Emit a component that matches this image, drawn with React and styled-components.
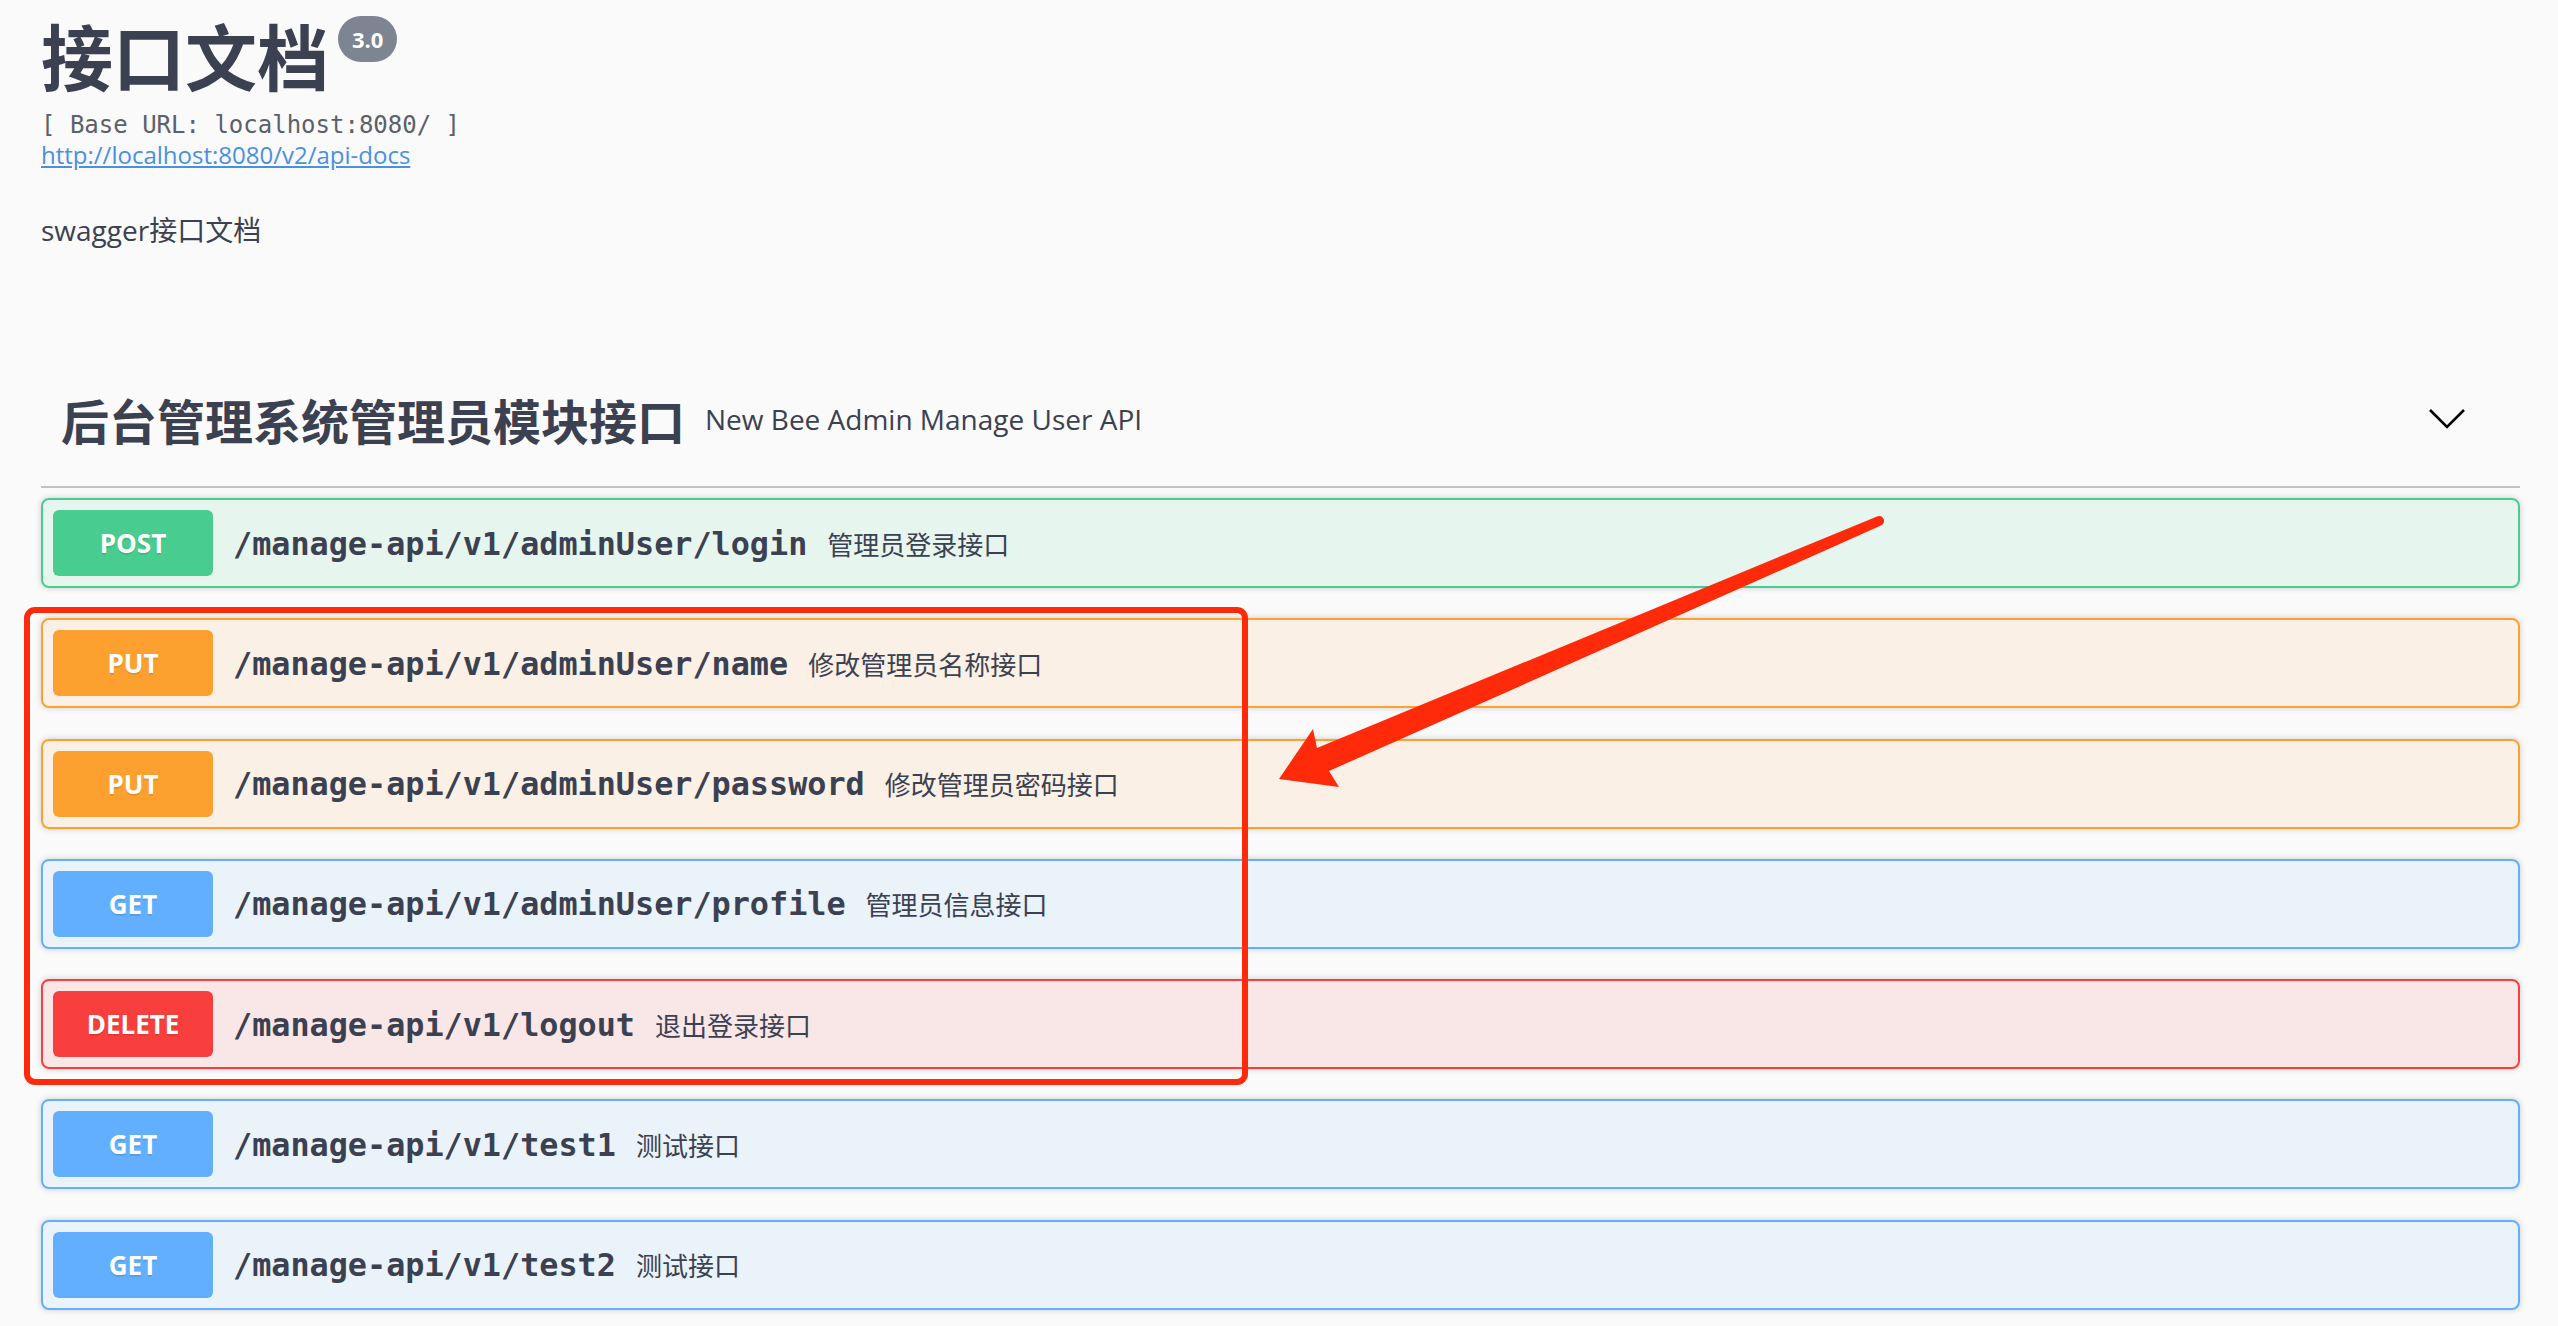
import React from "react";
import styled, { createGlobalStyle } from "styled-components";

const GlobalStyle = createGlobalStyle`
	html, body {
		margin: 0;
		padding: 0;
		background: #fafafa;
	}
	body {
		font-family: "Open Sans", "Noto Sans CJK SC", sans-serif;
		color: #3b4151;
	}
`;

const METHODS = {
	POST: { border: "#49cc90", bg: "rgba(73, 204, 144, 0.1)" },
	PUT: { border: "#fca130", bg: "rgba(252, 161, 48, 0.1)" },
	GET: { border: "#61affe", bg: "rgba(97, 175, 254, 0.1)" },
	DELETE: { border: "#f93e3e", bg: "rgba(249, 62, 62, 0.1)" },
};

const ops = [
	{ method: "POST", path: "/manage-api/v1/adminUser/login", desc: "管理员登录接口" },
	{ method: "PUT", path: "/manage-api/v1/adminUser/name", desc: "修改管理员名称接口" },
	{ method: "PUT", path: "/manage-api/v1/adminUser/password", desc: "修改管理员密码接口" },
	{ method: "GET", path: "/manage-api/v1/adminUser/profile", desc: "管理员信息接口" },
	{ method: "DELETE", path: "/manage-api/v1/logout", desc: "退出登录接口" },
	{ method: "GET", path: "/manage-api/v1/test1", desc: "测试接口" },
	{ method: "GET", path: "/manage-api/v1/test2", desc: "测试接口" },
];

const Page = styled.div`
	position: relative;
	width: 2558px;
	min-height: 1326px;
	overflow: hidden;
`;

const Wrapper = styled.div`
	padding: 0 38px 0 41px;
`;

const Info = styled.div`
	padding-top: 10px;
`;

const TitleRow = styled.div`
	display: flex;
	align-items: flex-start;
`;

const Title = styled.h2`
	margin: 0;
	font-family: "Noto Sans CJK SC", sans-serif;
	font-size: 72px;
	line-height: 88px;
	font-weight: 700;
	color: #3b4151;
`;

const Version = styled.span`
	margin: 6px 0 0 9px;
	height: 46px;
	padding: 0 14px;
	border-radius: 23px;
	background: #7d8492;
	color: #fff;
	font-family: "Open Sans", sans-serif;
	font-weight: 700;
	font-size: 22px;
	line-height: 46px;
`;

const BaseUrl = styled.div`
	margin-top: 12px;
	font-family: "DejaVu Sans Mono", monospace;
	font-size: 24px;
	line-height: 30px;
	color: #5b606c;
`;

const Link = styled.a`
	display: inline-block;
	margin-top: 0;
	font-family: "Open Sans", sans-serif;
	font-size: 24px;
	line-height: 30px;
	color: #4990e2;
	text-decoration: underline;
`;

const Description = styled.p`
	margin: 40px 0 0;
	font-family: "Open Sans", "Noto Sans CJK SC", sans-serif;
	font-size: 28px;
	line-height: 40px;
	color: #3b4151;
`;

const Tag = styled.div`
	margin: 106px 0 10px;
	padding: 18px 40px 22px 20px;
	min-height: 90px;
	display: flex;
	align-items: center;
	border-bottom: 2px solid rgba(59, 65, 81, 0.3);
`;

const TagName = styled.span`
	font-family: "Noto Sans CJK SC", sans-serif;
	font-size: 48px;
	font-weight: 700;
	line-height: 60px;
	color: #3b4151;
`;

const TagDesc = styled.small`
	flex: 1;
	padding: 0 20px;
	font-family: "Open Sans", sans-serif;
	font-size: 28px;
	line-height: 40px;
	color: #3b4151;
`;

const Expand = styled.button`
	border: none;
	background: none;
	padding: 0;
	margin-right: 15px;
	display: flex;
`;

const Op = styled.div`
	margin: 0 0 30.3px;
	border: 2px solid ${(p) => METHODS[p.$method].border};
	background: ${(p) => METHODS[p.$method].bg};
	border-radius: 8px;
	box-shadow: 0 0 6px rgba(0, 0, 0, 0.19);
`;

const Summary = styled.div`
	display: flex;
	align-items: center;
	padding: 10px;
`;

const Method = styled.span`
	min-width: 160px;
	box-sizing: border-box;
	padding: 12px 30px;
	text-align: center;
	border-radius: 6px;
	background: ${(p) => METHODS[p.$method].border};
	color: #fff;
	font-family: "Open Sans", sans-serif;
	font-weight: 700;
	font-size: 26px;
	line-height: 42px;
	text-shadow: 0 2px 0 rgba(0, 0, 0, 0.1);
`;

const Path = styled.span`
	padding: 0 20px;
	font-family: "DejaVu Sans Mono", monospace;
	font-weight: 600;
	font-size: 31.8px;
	color: #3b4151;
`;

const OpDesc = styled.span`
	flex: 1;
	font-family: "Noto Sans CJK SC", sans-serif;
	font-size: 26px;
	color: #3b4151;
`;

const Overlay = styled.svg`
	position: absolute;
	top: 0;
	left: 0;
	pointer-events: none;
`;

function Annotation() {
	return (
		<Overlay width="2558" height="1326" viewBox="0 0 2558 1326">
			<rect x="27" y="610" width="1218" height="472" rx="8" fill="none" stroke="#ff2a0a" strokeWidth="6" />
			<path
				d="M1279 779 L1313 729 L1317 748 L1877 516.4 A5 5 0 0 1 1881 525.6 L1329 771 L1339 787 Z"
				fill="#ff2a0a"
			/>
		</Overlay>
	);
}

function App() {
	return (
		<Page>
			<GlobalStyle />
			<Wrapper>
				<Info>
					<TitleRow>
						<Title>接口文档</Title>
						<Version>3.0</Version>
					</TitleRow>
					<BaseUrl>[ Base URL: localhost:8080/ ]</BaseUrl>
					<Link href="#">http://localhost:8080/v2/api-docs</Link>
					<Description>swagger接口文档</Description>
				</Info>
				<Tag>
					<TagName>后台管理系统管理员模块接口</TagName>
					<TagDesc>New Bee Admin Manage User API</TagDesc>
					<Expand>
						<svg width="36" height="22" viewBox="0 0 36 22">
							<polyline points="1,2 18,19 35,2" fill="none" stroke="#000" strokeWidth="2.6" />
						</svg>
					</Expand>
				</Tag>
				{ops.map((op, i) => (
					<Op key={i} $method={op.method}>
						<Summary>
							<Method $method={op.method}>{op.method}</Method>
							<Path>{op.path}</Path>
							<OpDesc>{op.desc}</OpDesc>
						</Summary>
					</Op>
				))}
			</Wrapper>
			<Annotation />
		</Page>
	);
}

export default App;
